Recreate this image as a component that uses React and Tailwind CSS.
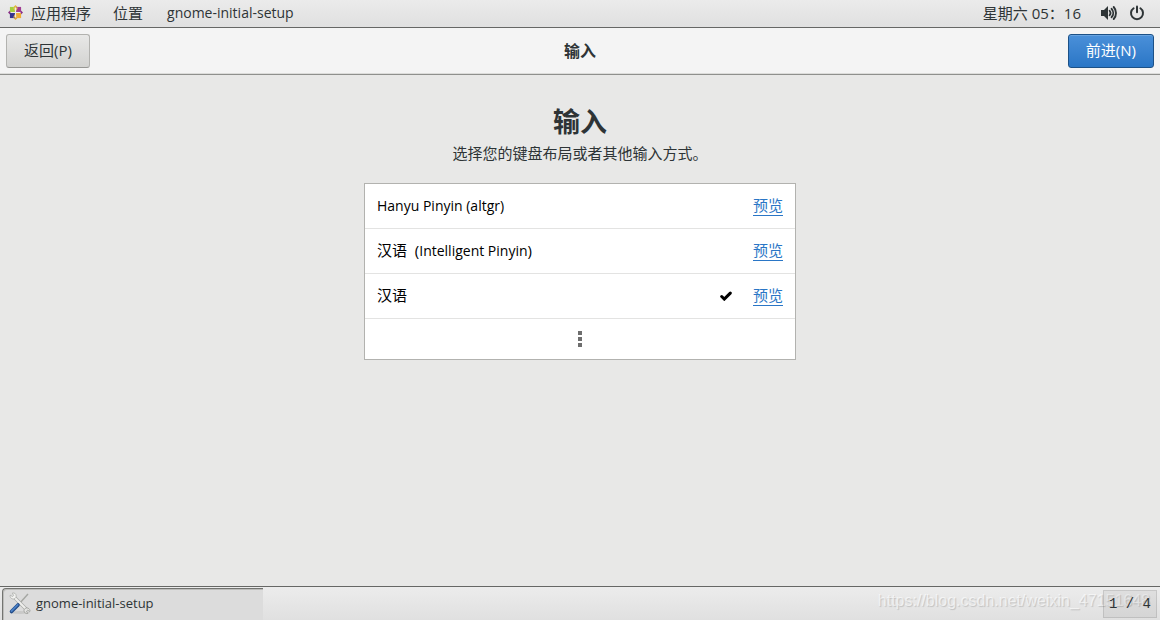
import { useState } from "react";

const LAYOUTS = [
  { id: "pinyin-altgr", latin: "Hanyu Pinyin (altgr)" },
  { id: "intelligent-pinyin", name: "汉语  (", latin: "Intelligent Pinyin", end: ")" },
  { id: "hanyu", name: "汉语" },
];

function ActivitiesIcon() {
  return (
    <svg width="15" height="15" viewBox="0 0 14 14" aria-hidden="true">
      <path d="M7 0l2.300 2.300H4.700z" fill="#e3b93c" />
      <path d="M7 14l2.300-2.300H4.700z" fill="#dba53c" />
      <path d="M0 7l2.300-2.300v4.600z" fill="#8a2f86" />
      <path d="M14 7l-2.300-2.300v4.600z" fill="#8a2f86" />
      <path d="M1.800 1.800h4.700v4.700H1.800z" fill="#a5cf3e" />
      <path d="M7.500 1.800h4.700v4.700H7.500z" fill="#a03c92" />
      <path d="M1.800 7.500h4.700v4.700H1.800z" fill="#343391" />
      <path d="M7.500 7.500h4.700v4.700H7.500z" fill="#efac34" />
      <path d="M4.800 2.300h1.700v3.500zM9.200 2.300H7.500v3.500z" fill="#efc95a" />
      <path d="M4.800 11.700h1.700V8.200zM9.200 11.700H7.500V8.200z" fill="#e8b85a" />
      <path d="M7 3v8M3 7h8" stroke="#f1efe9" strokeWidth=".6" />
    </svg>
  );
}

function VolumeIcon() {
  return (
    <svg width="16" height="16" viewBox="0 0 16 16" aria-hidden="true">
      <path d="M0 5h3l4-4v14l-4-4H0z" fill="#2e3436" />
      <g fill="none" stroke="#2e3436" strokeLinecap="round">
        <path d="M8.600 5.700a3.600 3.600 0 010 4.600" strokeWidth="1.800" />
        <path d="M10.600 3.800a6.300 6.300 0 010 8.400" strokeWidth="1.900" />
        <path d="M12.700 2a9 9 0 010 12" strokeWidth="1.900" />
      </g>
    </svg>
  );
}

function PowerIcon() {
  return (
    <svg width="16" height="16" viewBox="0 0 16 16" aria-hidden="true">
      <g fill="none" stroke="#2e3436" strokeWidth="2" strokeLinecap="round">
        <path d="M4.600 3.200a6 6 0 106.800 0" />
        <path d="M8 1.600v5.600" />
      </g>
    </svg>
  );
}

function ToolsIcon() {
  return (
    <svg width="24" height="24" viewBox="0 0 24 24" aria-hidden="true">
      <ellipse cx="12" cy="21.500" rx="10" ry="1.500" fill="#bdbdbb" opacity=".6" />
      <path d="M20 3L11 13" stroke="#a5a7a3" strokeWidth="1.400" />
      <path d="M5 5l14 14" stroke="#a5a7a3" strokeWidth="3.400" />
      <path d="M5 5l14 14" stroke="#eeeeec" strokeWidth="2.200" />
      <path
        d="M2.200 4.200l2.400 1.400 1-1L4.400 2c2-.5 4 .9 3.800 3.200-.2 2-2.200 3.300-4 2.600C2.600 7.200 1.800 5.800 2.200 4.200z"
        fill="#f4f4f2"
        stroke="#a5a7a3"
        strokeWidth=".7"
      />
      <path
        d="M21.900 20.500l-2.200-1.300-1.200 1.100 1.300 2.200c-2 .4-3.800-.8-3.800-2.900 0-1.900 2-3.200 3.800-2.500 1.700.6 2.500 2 2.100 3.400z"
        fill="#e4e4e2"
        stroke="#90928e"
        strokeWidth=".7"
      />
      <path d="M10 14l-6.500 6.500" stroke="#204a87" strokeWidth="3.600" strokeLinecap="round" />
      <path d="M9.700 13.800l-6.200 6.200" stroke="#4a7fc4" strokeWidth="1.800" strokeLinecap="round" />
    </svg>
  );
}

function TopBar() {
  return (
    <header className="flex h-7 items-center justify-between border-b border-[#666765] bg-linear-to-b from-[#ebebeb] to-[#e0e0e0] px-2 pb-0.5">
      <nav className="flex items-center">
        <button className="flex items-center gap-2">
          <ActivitiesIcon />
          应用程序
        </button>
        <button className="ml-[22px]">位置</button>
        <button className="ml-6 text-sm">gnome-initial-setup</button>
      </nav>
      <div className="flex items-center pr-[7px]">
        <time className="mr-5">星期六 05：16</time>
        <button aria-label="音量" className="mr-3">
          <VolumeIcon />
        </button>
        <button aria-label="电源">
          <PowerIcon />
        </button>
      </div>
    </header>
  );
}

function SetupHeader() {
  return (
    <div className="grid grid-cols-[1fr_auto_1fr] items-center border-b border-[#8f908d] bg-[#f4f4f4] p-1.5 shadow-[inset_0_-1px_0_#dcdcda]">
      <button className="h-[34px] justify-self-start rounded-[3px] border border-[#b2b2af] border-b-[#979794] bg-linear-to-b from-[#e8e8e7] to-[#d3d3d1] px-[17px] pb-0.5">
        返回(P)
      </button>
      <h2 className="text-base leading-5 font-bold">输入</h2>
      <button className="h-[34px] justify-self-end rounded-[3px] border border-[#1c5187] bg-linear-to-b from-[#4a90d9] to-[#2a76c6] px-[17px] pb-0.5 text-white shadow-[inset_0_1px_0_#68a3e0]">
        前进(N)
      </button>
    </div>
  );
}

function LayoutRow({ layout, checked, onSelect }) {
  return (
    <li className="flex h-[45px] items-center border-b border-[#e3e3e2] px-3 pb-0.5">
      <label className="flex flex-1 items-center whitespace-pre">
        <span>
          {layout.name}
          <span className="text-sm leading-5">{layout.latin}</span>
          {layout.end}
        </span>
        <input
          type="radio"
          name="layout"
          checked={checked}
          onChange={() => onSelect(layout.id)}
          className="peer ml-auto size-0 appearance-none"
        />
        <svg width="12" height="12" viewBox="0 0 12 12" className="hidden peer-checked:block" aria-hidden="true">
          <path d="M1.700 7.500l2.600 2.600 6-6" fill="none" stroke="#000" strokeWidth="3" strokeLinecap="round" />
        </svg>
      </label>
      <a href="#preview" className="ml-[21px] border-b border-[#2a76c6] leading-5 text-[#2a76c6]">
        预览
      </a>
    </li>
  );
}

function Taskbar() {
  return (
    <footer className="relative flex h-[34px] items-center justify-between border-t border-[#666765] bg-linear-to-b from-[#ececec] to-[#e0e0e0] pr-[3px] pl-0.5">
      <button className="flex h-8 w-[261px] items-center gap-1 rounded-tl-sm border-t border-l border-[#737471] bg-[#dcdcdc] pb-0.5 pl-[5px] text-[13px] shadow-[inset_1px_1px_0_#bdbdbb]">
        <ToolsIcon />
        gnome-initial-setup
      </button>
      <span className="z-10 flex h-7 w-[54px] items-center justify-center border border-black/10 bg-black/5 font-['Liberation_Mono',monospace] text-sm">
        1 / 4
      </span>
      <span className="pointer-events-none absolute top-1 right-2.5 font-['Liberation_Sans',sans-serif] text-base leading-5 text-white/60 [text-shadow:1px_1px_1px_#00000028]">
        https://blog.csdn.net/weixin_47151648
      </span>
    </footer>
  );
}

export default function App() {
  const [selected, setSelected] = useState("hanyu");

  return (
    <div className="flex min-h-screen flex-col bg-[#e8e8e7] font-['Open_Sans','Noto_Sans_CJK_SC',sans-serif] text-[15px] leading-5 text-[#2e3436]">
      <TopBar />
      <SetupHeader />

      <main className="flex flex-1 flex-col items-center px-4 pt-[27px]">
        <h1 className="text-[27px] leading-10 font-bold">输入</h1>
        <p className="mt-px leading-5">选择您的键盘布局或者其他输入方式。</p>

        <ul className="mt-5 w-full max-w-[432px] border border-[#b2b2af] bg-white text-black">
          {LAYOUTS.map((layout) => (
            <LayoutRow
              key={layout.id}
              layout={layout}
              checked={layout.id === selected}
              onSelect={setSelected}
            />
          ))}
          <li>
            <button aria-label="更多" className="flex h-10 w-full items-center justify-center">
              <svg width="4" height="16" viewBox="0 0 4 16" fill="#6e6e6e" aria-hidden="true">
                <path d="M0 0h4v4H0zM0 6h4v4H0zM0 12h4v4H0z" />
              </svg>
            </button>
          </li>
        </ul>
      </main>

      <Taskbar />
    </div>
  );
}
